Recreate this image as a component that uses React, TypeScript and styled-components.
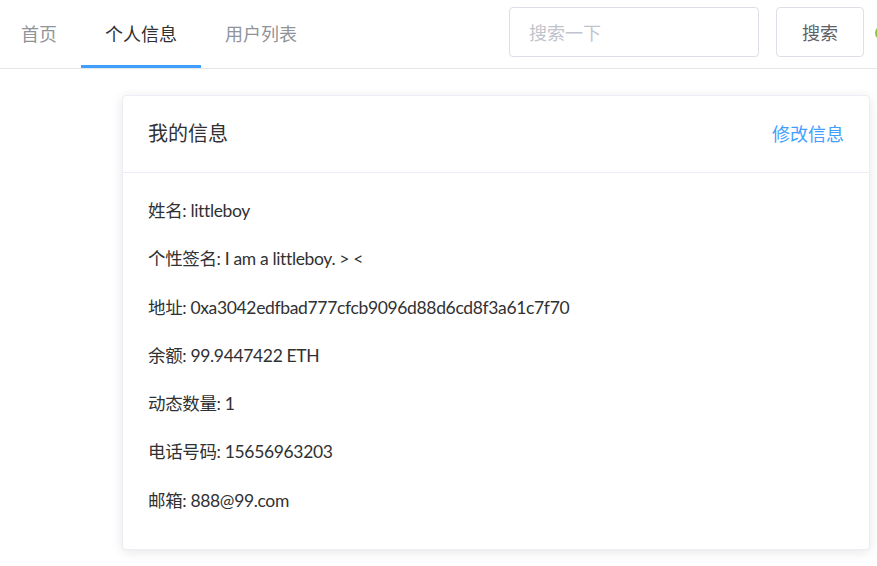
import React from "react";
import styled, { createGlobalStyle } from "styled-components";

const Global = createGlobalStyle`
  html, body { margin: 0; padding: 0; background: #fff; }
  body {
    font-family: "Lato", "Noto Sans CJK SC", sans-serif;
    color: #303133;
    overflow: hidden;
  }
  * { box-sizing: border-box; }
`;

const Page = styled.div`
  width: 877px;
  height: 566px;
  overflow: hidden;
`;

const Header = styled.header`
  height: 69px;
  border-bottom: 1px solid #e6e6e6;
  display: flex;
  align-items: flex-start;
`;

const Nav = styled.nav`
  display: flex;
  margin-left: -3px;
  height: 68px;
`;

const Tab = styled.div<{ $active?: boolean }>`
  height: 68px;
  padding: 0 24px;
  display: flex;
  align-items: center;
  font-size: 18px;
  color: ${(p) => (p.$active ? "#303133" : "#909399")};
  border-bottom: 3px solid ${(p) => (p.$active ? "#409eff" : "transparent")};
  padding-top: 1px;
`;

const SearchArea = styled.div`
  display: flex;
  align-items: center;
  margin-left: auto;
  gap: 17px;
  height: 63px;
  margin-right: -12px;
`;

const SearchInput = styled.div`
  width: 250px;
  height: 50px;
  border: 1px solid #dcdfe6;
  border-radius: 4px;
  padding: 0 19px;
  display: flex;
  align-items: center;
  font-size: 18px;
  color: #c0c4cc;
`;

const Button = styled.div`
  width: 88px;
  height: 50px;
  border: 1px solid #dcdfe6;
  border-radius: 4px;
  display: flex;
  align-items: center;
  justify-content: center;
  font-size: 18px;
  color: #606266;
`;

const Dot = styled.div`
  width: 14px;
  height: 14px;
  border-radius: 50%;
  border: 3px solid #8bc34a;
  margin-left: -6px;
  margin-top: 2px;
`;

const Main = styled.main`
  padding: 26px 7px 0 122px;
`;

const Card = styled.section`
  width: 748px;
  height: 455px;
  border: 1px solid #ebeef5;
  border-radius: 4px;
  box-shadow: 0 2px 12px 0 rgba(0, 0, 0, 0.1);
  background: #fff;
  overflow: hidden;
`;

const CardHeader = styled.div`
  height: 77px;
  border-bottom: 1px solid #ebeef5;
  display: flex;
  align-items: center;
  justify-content: space-between;
  padding: 0 25px 3px 25px;
`;

const Title = styled.div`
  font-size: 20px;
  color: #303133;
`;

const Link = styled.div`
  font-size: 18px;
  color: #409eff;
`;

const CardBody = styled.div`
  padding: 25px 25px 34px;
  display: flex;
  flex-direction: column;
  gap: 22.3px;
`;

const Row = styled.div`
  font-size: 17.5px;
  line-height: 26px;
  letter-spacing: -0.35px;
  color: #303133;
`;

const rows = [
  "姓名: littleboy",
  "个性签名: I am a littleboy. > <",
  "地址: 0xa3042edfbad777cfcb9096d88d6cd8f3a61c7f70",
  "余额: 99.9447422 ETH",
  "动态数量: 1",
  "电话号码: 15656963203",
  "邮箱: 888@99.com",
];

export default function App() {
  return (
    <Page>
      <Global />
      <Header>
        <Nav>
          <Tab>首页</Tab>
          <Tab $active>个人信息</Tab>
          <Tab>用户列表</Tab>
        </Nav>
        <SearchArea>
          <SearchInput>搜索一下</SearchInput>
          <Button>搜索</Button>
          <Dot />
        </SearchArea>
      </Header>
      <Main>
        <Card>
          <CardHeader>
            <Title>我的信息</Title>
            <Link>修改信息</Link>
          </CardHeader>
          <CardBody>
            {rows.map((r) => (
              <Row key={r}>{r}</Row>
            ))}
          </CardBody>
        </Card>
      </Main>
    </Page>
  );
}
